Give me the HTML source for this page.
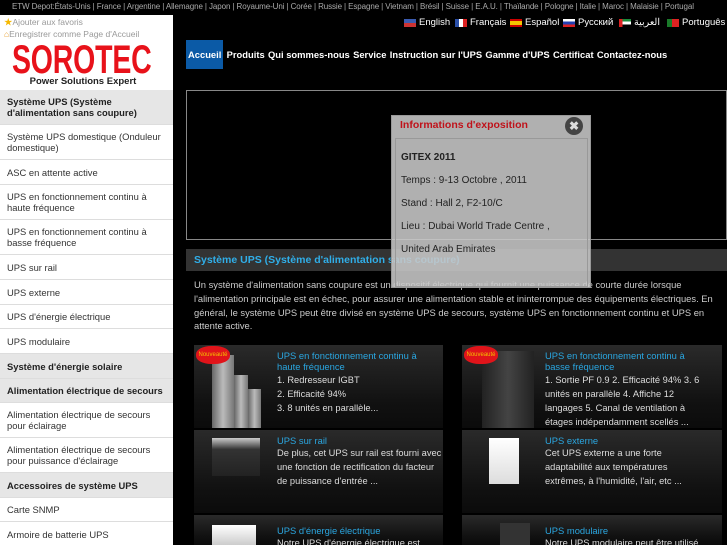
<!DOCTYPE html>
<html><head><meta charset="utf-8">
<style>
*{margin:0;padding:0;box-sizing:border-box}
html,body{width:727px;height:545px;overflow:hidden}
body{background:#000;font-family:"Liberation Sans","Noto Sans CJK SC",sans-serif;position:relative;color:#fff}
.top{position:absolute;left:12px;top:2px;font-size:8px;color:#aaa;white-space:nowrap;letter-spacing:-0.1px}
.side{position:absolute;left:0;top:15px;width:173px;height:530px;background:#fff;color:#333;overflow:hidden}
.fav{font-size:8.5px;color:#999;position:absolute;left:4px}
.logo{position:absolute;left:12px;top:30px;width:142px;text-align:center}
.logo .l1{font-weight:bold;font-size:28.5px;color:#e8121a;line-height:22px;height:26px;transform:scaleY(1.4);transform-origin:top;text-align:left;letter-spacing:-0.2px}
.logo .l2{font-weight:bold;font-size:9.5px;color:#222;margin-top:5px}
.menu{position:absolute;top:75px;left:0;width:173px}
.menu div{border-bottom:1px solid #ddd;font-size:9.4px;padding:0 7px;display:flex;align-items:center;line-height:11px}
.menu .h{background:#e6e6e6;font-weight:bold;color:#222}
.nav{position:absolute;top:40px;left:186px;height:29px;display:flex;align-items:center;font-size:9.4px;font-weight:bold;white-space:nowrap}
.nav span{margin-right:3.3px}
.nav .a{background:#0b5aa6;height:29px;line-height:29px;padding:0 2px}
.langs span{position:absolute;top:17px;font-size:9.5px;white-space:nowrap;display:flex;align-items:center}
.fl{display:inline-block;width:12px;height:8px;margin-right:3px}
.banner{position:absolute;left:186px;top:90px;width:541px;height:150px;border:1px solid #888}
.pop{position:absolute;left:391px;top:115px;width:200px;height:173px;background:rgba(200,200,200,0.88);border:1px solid #999}
.pop .t{position:absolute;left:8px;top:3px;color:#c0121a;font-weight:bold;font-size:10.5px}
.pop .x{position:absolute;left:173px;top:1px;width:18px;height:18px;border-radius:50%;background:#444;color:#ddd;font-size:12px;text-align:center;line-height:18px;font-weight:bold}
.pop .in{position:absolute;left:3px;top:22px;width:193px;height:149px;border:1px solid #999}
.pop p{position:absolute;left:9px;color:#222;font-size:10px;white-space:nowrap}
.tb{position:absolute;left:186px;top:249px;width:541px;height:22px;background:#333;color:#30aee8;font-weight:bold;font-size:10.5px;line-height:22px;padding-left:8px}
.para{position:absolute;left:194px;top:278px;width:527px;font-size:9.4px;line-height:13.8px;color:#ccc}
.card{position:absolute;height:83px;background:linear-gradient(#2a2a2a,#111 70%,#0b0b0b);overflow:hidden}
.card h4{position:absolute;left:83px;top:5px;font-weight:normal;color:#2aa6e0;font-size:9.4px;line-height:11px;width:165px}
.card p{position:absolute;left:83px;font-size:9.3px;line-height:14px;color:#ddd;width:172px}
.img{position:absolute;background:linear-gradient(90deg,#666,#bbb,#777);}
.new{position:absolute;left:2px;top:1px;width:34px;height:18px;background:#e0141a;border-radius:45%;color:#f3c000;font-size:6px;text-align:center;line-height:18px}
</style></head><body>
<div class="top">ETW Depot:États-Unis | France | Argentine | Allemagne | Japon | Royaume-Uni | Corée | Russie | Espagne | Vietnam | Brésil | Suisse | E.A.U. | Thaïlande | Pologne | Italie | Maroc | Malaisie | Portugal</div>
<div class="side">
<div class="fav" style="top:1px"><span style="color:#f5b800">★</span>Ajouter aux favoris</div>
<div class="fav" style="top:14px"><span style="color:#e8a030">⌂</span>Enregistrer comme Page d'Accueil</div>
<div class="logo"><div class="l1">SOROTEC</div><div class="l2">Power Solutions Expert</div></div>
<div class="menu">
<div class="h" style="height:35px">Système UPS (Système d'alimentation sans coupure)</div>
<div style="height:35px">Système UPS domestique (Onduleur domestique)</div>
<div style="height:25px">ASC en attente active</div>
<div style="height:35px">UPS en fonctionnement continu à haute fréquence</div>
<div style="height:35px">UPS en fonctionnement continu à basse fréquence</div>
<div style="height:25px">UPS sur rail</div>
<div style="height:25px">UPS externe</div>
<div style="height:24px">UPS d'énergie électrique</div>
<div style="height:25px">UPS modulaire</div>
<div class="h" style="height:25px">Système d'énergie solaire</div>
<div class="h" style="height:24px">Alimentation électrique de secours</div>
<div style="height:35px">Alimentation électrique de secours pour éclairage</div>
<div style="height:35px">Alimentation électrique de secours pour puissance d'éclairage</div>
<div class="h" style="height:25px">Accessoires de système UPS</div>
<div style="height:24px">Carte SNMP</div>
<div style="height:25px">Armoire de batterie UPS</div>
</div></div>
<div class="langs">
<span style="left:404px"><i class="fl" style="background:linear-gradient(#3b5bb0 50%,#c33 50%)"></i>English</span>
<span style="left:455px"><i class="fl" style="background:linear-gradient(90deg,#2a4fa8 33%,#fff 33% 66%,#d22 66%)"></i>Français</span>
<span style="left:510px"><i class="fl" style="background:linear-gradient(#c00 25%,#f5c400 25% 75%,#c00 75%)"></i>Español</span>
<span style="left:563px"><i class="fl" style="background:linear-gradient(#fff 33%,#2340b0 33% 66%,#d22 66%)"></i>Русский</span>
<span style="left:619px"><i class="fl" style="background:linear-gradient(90deg,#d22 30%,transparent 30%),linear-gradient(#1a8a3a 33%,#fff 33% 66%,#000 66%)"></i>العربية</span>
<span style="left:667px"><i class="fl" style="background:linear-gradient(90deg,#1a7a2a 40%,#d22 40%)"></i>Português</span>
</div>
<div class="nav"><span class="a">Accueil</span><span>Produits</span><span>Qui sommes-nous</span><span>Service</span><span>Instruction sur l'UPS</span><span>Gamme d'UPS</span><span>Certificat</span><span>Contactez-nous</span></div>
<div class="banner"></div>
<div class="tb">Système UPS (Système d'alimentation sans coupure)</div>
<div class="para">Un système d'alimentation sans coupure est un dispositif électrique qui fournit une puissance de courte durée lorsque l'alimentation principale est en échec, pour assurer une alimentation stable et ininterrompue des équipements électriques. En général, le système UPS peut être divisé en système UPS de secours, système UPS en fonctionnement continu et UPS en attente active.</div>

<div class="card" style="left:194px;top:345px;width:249px">
<div class="img" style="left:18px;top:10px;width:22px;height:73px"></div><div class="img" style="left:40px;top:30px;width:14px;height:53px"></div><div class="img" style="left:54px;top:44px;width:13px;height:39px"></div>
<div class="new">Nouveauté</div>
<h4>UPS en fonctionnement continu à haute fréquence</h4>
<p style="top:28px">1. Redresseur IGBT<br>2. Efficacité 94%<br>3. 8 unités en parallèle...</p></div>
<div class="card" style="left:462px;top:345px;width:260px">
<div class="img" style="left:20px;top:6px;width:52px;height:77px;background:linear-gradient(90deg,#222,#444,#222)"></div>
<div class="new">Nouveauté</div>
<h4>UPS en fonctionnement continu à basse fréquence</h4>
<p style="top:28px;width:162px">1. Sortie PF 0.9 2. Efficacité 94% 3. 6 unités en parallèle 4. Affiche 12 langages 5. Canal de ventilation à étages indépendamment scellés ...</p></div>
<div class="card" style="left:194px;top:430px;width:249px">
<div class="img" style="left:18px;top:8px;width:48px;height:38px;background:linear-gradient(#ccc,#333 30%,#222)"></div>
<h4>UPS sur rail</h4>
<p style="top:16px;width:166px">De plus, cet UPS sur rail est fourni avec une fonction de rectification du facteur de puissance d'entrée ...</p></div>
<div class="card" style="left:462px;top:430px;width:260px">
<div class="img" style="left:27px;top:8px;width:30px;height:46px;background:linear-gradient(#fff,#ddd)"></div>
<h4>UPS externe</h4>
<p style="top:16px;width:160px">Cet UPS externe a une forte adaptabilité aux températures extrêmes, à l'humidité, l'air, etc ...</p></div>
<div class="card" style="left:194px;top:515px;width:249px;height:30px">
<div class="img" style="left:18px;top:10px;width:44px;height:20px;background:linear-gradient(#fff,#ccc)"></div>
<h4 style="top:10px">UPS d'énergie électrique</h4>
<p style="top:21px">Notre UPS d'énergie électrique est</p></div>
<div class="card" style="left:462px;top:515px;width:260px;height:30px">
<div class="img" style="left:38px;top:8px;width:30px;height:22px;background:#333"></div>
<h4 style="top:10px">UPS modulaire</h4>
<p style="top:21px">Notre UPS modulaire peut être utilisé</p></div>

<div class="pop">
<div class="t">Informations d'exposition</div><div class="x">✖</div>
<div class="in"></div>
<p style="top:36px;font-weight:bold">GITEX 2011</p>
<p style="top:59px">Temps : 9-13 Octobre , 2011</p>
<p style="top:82px">Stand : Hall 2, F2-10/C</p>
<p style="top:105px">Lieu : Dubai World Trade Centre ,</p>
<p style="top:128px">United Arab Emirates</p>
</div>
</body></html>
